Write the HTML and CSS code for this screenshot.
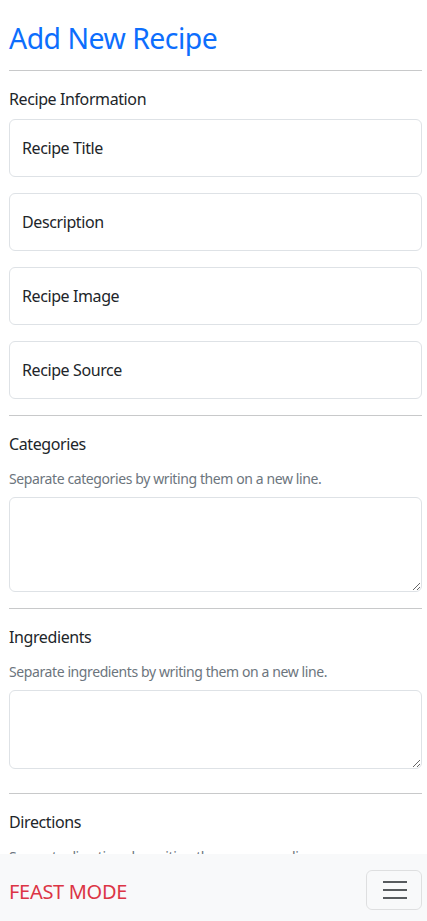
FILE: index.html
```html
<!DOCTYPE html>
<html lang="en">
<head>
<meta charset="utf-8">
<title>Add New Recipe</title>
<link rel="stylesheet" href="styles.css">
</head>
<body>
<main class="page">
  <h1 class="title">Add New Recipe</h1>
  <hr class="rule">
  <section class="group">
    <div class="group-label">Recipe Information</div>
    <div class="field"><span class="field-label">Recipe Title</span></div>
    <div class="field"><span class="field-label">Description</span></div>
    <div class="field"><span class="field-label">Recipe Image</span></div>
    <div class="field"><span class="field-label">Recipe Source</span></div>
  </section>
  <hr class="rule">
  <section class="group">
    <div class="group-label">Categories</div>
    <div class="help">Separate categories by writing them on a new line.</div>
    <textarea class="area area-tall"></textarea>
  </section>
  <hr class="rule">
  <section class="group">
    <div class="group-label">Ingredients</div>
    <div class="help">Separate ingredients by writing them on a new line.</div>
    <textarea class="area area-short"></textarea>
  </section>
  <hr class="rule">
  <section class="group">
    <div class="group-label">Directions</div>
    <div class="help">Separate directions by writing them on a new line.</div>
    <textarea class="area area-tall"></textarea>
  </section>
</main>
<nav class="navbar">
  <span class="brand">FEAST MODE</span>
  <button class="toggler" aria-label="Toggle navigation">
    <svg width="30" height="30" viewBox="0 0 30 30"><path d="M4 7h24M4 15h24M4 23h24" stroke="rgba(33,37,41,0.75)" stroke-width="2" stroke-linecap="butt"/></svg>
  </button>
</nav>
</body>
</html>
```
FILE: styles.css
```css
* { box-sizing: border-box; }
html, body { margin: 0; padding: 0; }
body {
  font-family: "Noto Sans", "Open Sans", sans-serif;
  font-size: 16px;
  line-height: 1.5;
  letter-spacing: -0.4px;
  color: #212529;
  background: #fff;
}
.page {
  padding: 21px 5px 120px 9px;
}
.title {
  margin: 0 0 15px;
  font-size: 28.4px;
  font-weight: 400;
  line-height: 34px;
  letter-spacing: -0.5px;
  color: #0d6efd;
}
.rule {
  margin: 0 0 16px;
  border: 0;
  border-top: 1px solid #c8c9ca;
  height: 0;
}
.group { display: flex; flex-direction: column; }
.group-label { line-height: 24px; margin-bottom: 8px; }
.field {
  height: 58px;
  border: 1px solid #dee2e6;
  border-radius: 6px;
  padding: 16px 12px;
  margin-bottom: 16px;
}
.field-label { display: block; line-height: 24px; color: #212529; }
.help {
  font-size: 14px;
  line-height: 21px;
  color: #6c757d;
  margin-top: 4px;
  margin-bottom: 8px;
}
.area {
  display: block;
  width: 100%;
  border: 1px solid #dee2e6;
  border-radius: 6px;
  margin: 0 0 16px;
  padding: 6px 12px;
  font: inherit;
  resize: vertical;
  background: #fff;
}
.area-tall { height: 95px; }
.area-short { height: 79px; margin-bottom: 24px; }
.navbar {
  position: fixed;
  left: 0; right: 0; bottom: 0;
  height: 67px;
  background: #f8f9fa;
  display: flex;
  align-items: center;
  justify-content: space-between;
  padding: 0 5px 0 9px;
}
.brand {
  font-size: 20px;
  line-height: 30px;
  color: #dc3545;
  letter-spacing: -0.3px;
  padding-top: 9px;
}
.toggler {
  width: 56px;
  height: 40px;
  border: 1px solid rgba(0,0,0,0.1);
  border-radius: 6px;
  background: transparent;
  display: flex;
  align-items: center;
  justify-content: center;
  padding: 0;
  margin-top: 5px;
}
.toggler svg { display: block; }
```
